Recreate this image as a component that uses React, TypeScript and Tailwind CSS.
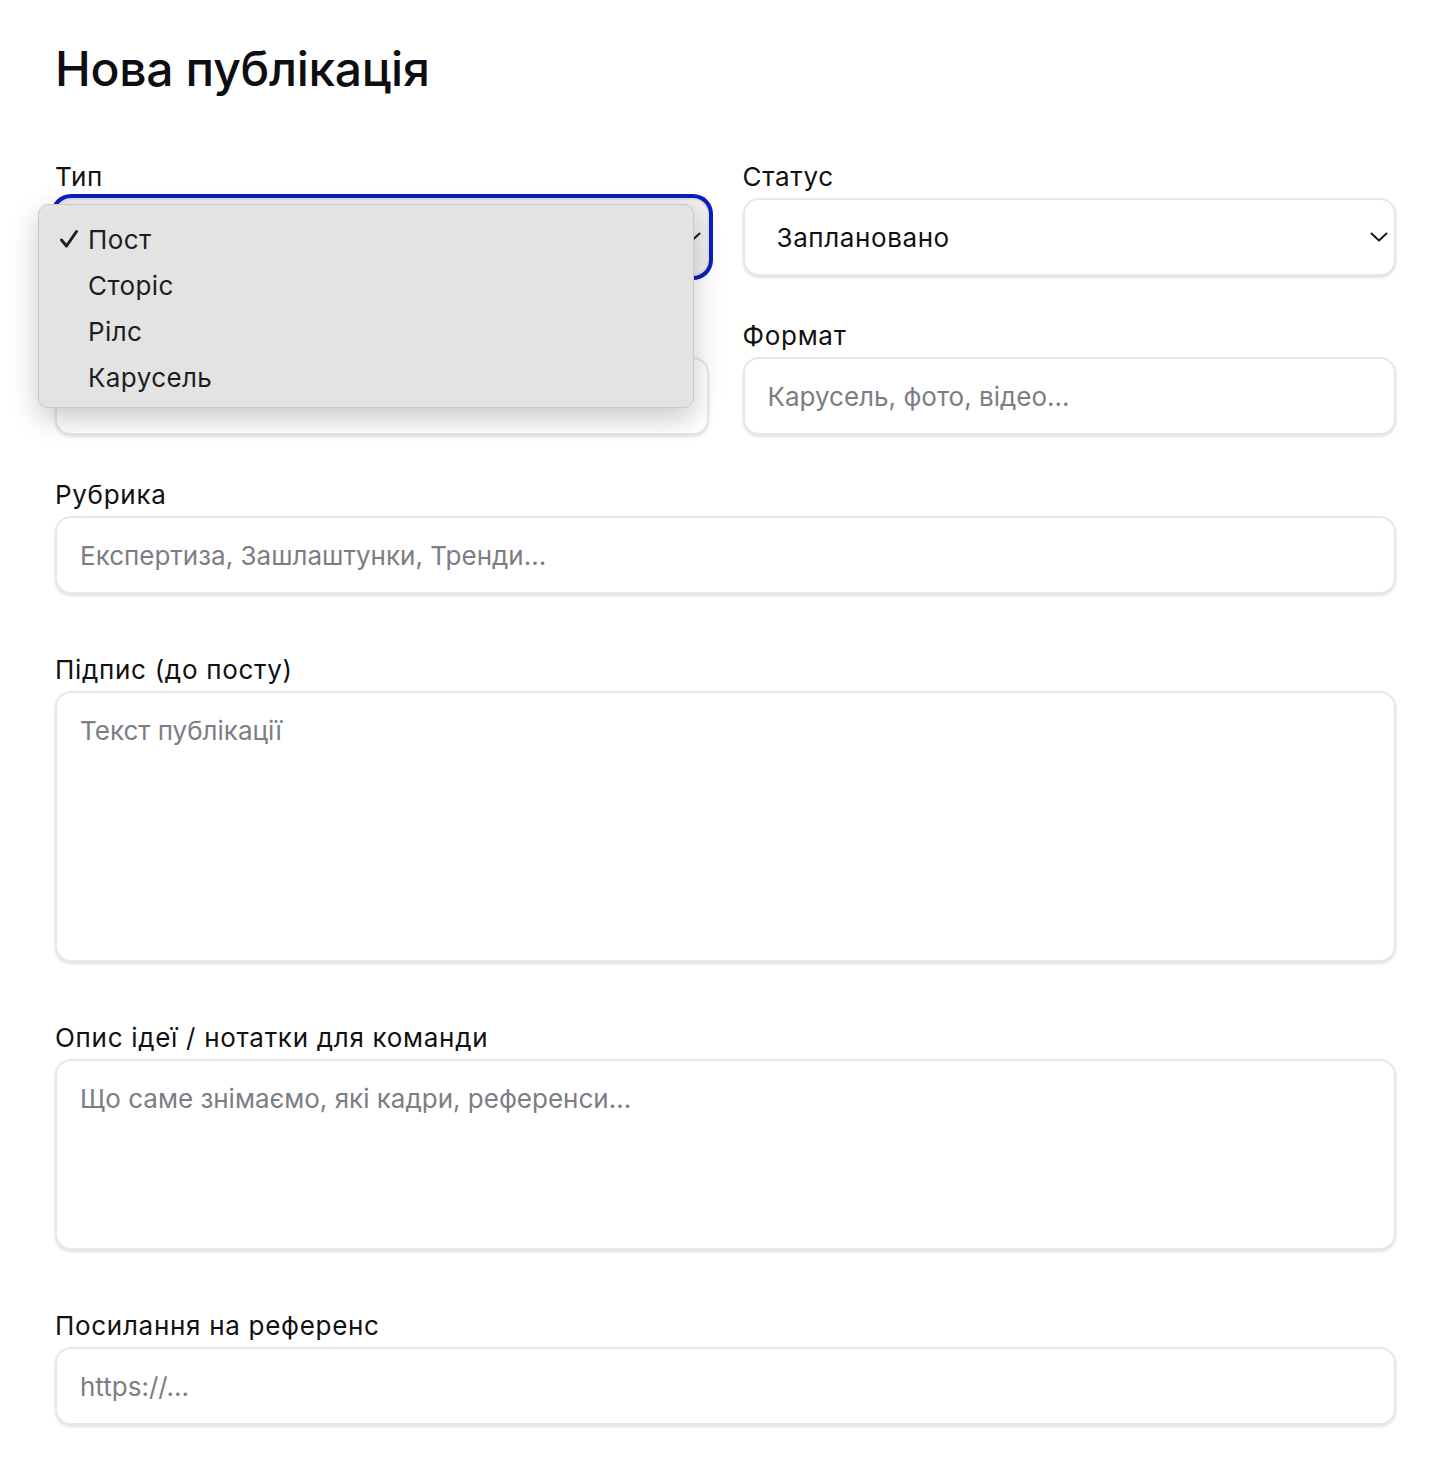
import React from "react";

const inputCls =
  "block w-full h-[78px] rounded-[16px] border-2 border-[#e7e7e7] bg-white px-[23px] text-[26px] text-[#111] placeholder:text-[#7d7d86] shadow-[0_2px_3px_rgba(0,0,0,0.12)] outline-none";

const areaCls =
  "block w-full resize-none rounded-[16px] border-2 border-[#e7e7e7] bg-white px-[23px] pt-[22px] text-[26px] leading-[32px] text-[#111] placeholder:text-[#7d7d86] shadow-[0_2px_3px_rgba(0,0,0,0.12)] outline-none";

function Label({ children }: { children?: React.ReactNode }) {
  return (
    <div className="pt-[3px] mb-[5px] h-[35px] text-[26px] leading-[32px] font-normal tracking-[0.7px] text-[#111]">
      {children}
    </div>
  );
}

function Chevron() {
  return (
    <svg width="18" height="10" viewBox="0 0 18 10" fill="none" className="shrink-0">
      <polyline points="1.5,1.5 9,8.5 16.5,1.5" stroke="#1a1a1a" strokeWidth="2" strokeLinecap="round" strokeLinejoin="round" />
    </svg>
  );
}

function SelectBox({ value, focused }: { value: string; focused?: boolean }) {
  return (
    <div
      className={
        focused
          ? "flex items-center justify-between h-[78px] rounded-[16px] border-2 border-[#e0e0e0] bg-[#efefef] pl-[32px] pr-[6px] text-[26px] text-[#111] ring-4 ring-[#0b1ec2]"
          : "flex items-center justify-between h-[78px] rounded-[16px] border-2 border-[#e7e7e7] bg-white pl-[32px] pr-[6px] text-[26px] text-[#111] shadow-[0_2px_3px_rgba(0,0,0,0.12)]"
      }
    >
      <span className="tracking-[0.6px]">{value}</span>
      <Chevron />
    </div>
  );
}

export default function App() {
  return (
    <div
      className="min-h-screen bg-white pl-[55px] pr-[38px] pt-[40px] pb-[30px]"
      style={{ fontFamily: "Inter, 'Noto Sans', sans-serif" }}
    >
      <h1 className="text-[48px] leading-[58px] font-medium text-[#0d0d12] tracking-[-0.3px]">Нова публікація</h1>

      <div className="mt-[60px] grid grid-cols-2 gap-x-[34px] gap-y-[41px]">
        <div className="relative">
          <Label>Тип</Label>
          <SelectBox value="Пост" focused />
          <div className="absolute left-[-17px] top-[46px] z-10 w-[656px] h-[204px] rounded-[10px] border border-[#c9c9c9] bg-[#e3e3e3] pt-[11px] shadow-[0_10px_28px_rgba(0,0,0,0.22)] text-[26px] text-[#1e1e1e]">
            {["Пост", "Сторіс", "Рілс", "Карусель"].map((t, i) => (
              <div key={t} className="flex items-center h-[46px]">
                <span className="flex w-[49px] pl-[20px]">
                  {i === 0 ? (
                    <svg width="20" height="20" viewBox="0 0 20 20" fill="none">
                      <path d="M2.5 11 L7.5 17 L17.5 2.5" stroke="#1e1e1e" strokeWidth="3" strokeLinecap="round" strokeLinejoin="round" />
                    </svg>
                  ) : null}
                </span>
                <span className="tracking-[0.4px]">{t}</span>
              </div>
            ))}
          </div>
        </div>
        <div>
          <Label>Статус</Label>
          <SelectBox value="Заплановано" />
        </div>
        <div>
          <Label />
          <input className={inputCls} />
        </div>
        <div>
          <Label>Формат</Label>
          <input className={inputCls} placeholder="Карусель, фото, відео..." />
        </div>
      </div>

      <div className="mt-[41px]">
        <Label>Рубрика</Label>
        <input className={inputCls} placeholder="Експертиза, Зашлаштунки, Тренди..." />
      </div>

      <div className="mt-[57px]">
        <Label>Підпис (до посту)</Label>
        <textarea className={areaCls + " h-[271px]"} placeholder="Текст публікації" />
      </div>

      <div className="mt-[57px]">
        <Label>Опис ідеї / нотатки для команди</Label>
        <textarea className={areaCls + " h-[191px]"} placeholder="Що саме знімаємо, які кадри, референси..." />
      </div>

      <div className="mt-[57px]">
        <Label>Посилання на референс</Label>
        <input className={inputCls} placeholder="https://..." />
      </div>
    </div>
  );
}
